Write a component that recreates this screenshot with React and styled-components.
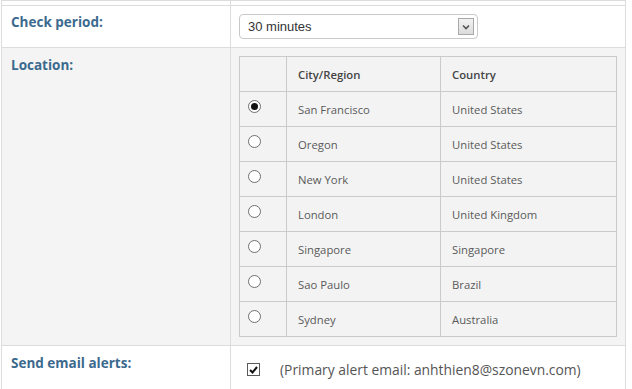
import React from "react";
import styled, { createGlobalStyle } from "styled-components";

const Global = createGlobalStyle`
  html, body { margin: 0; padding: 0; background: #fff; }
  body { font-family: "Open Sans", "Liberation Sans", sans-serif; }
`;

const Page = styled.div`
  padding-left: 1px;
  width: 625px;
`;

const FormTable = styled.table`
  border-collapse: collapse;
  width: 625px;
  table-layout: fixed;
`;

const Row = styled.tr`
  background: ${(p) => (p.$alt ? "#f4f4f4" : "#fff")};
`;

const LabelCell = styled.td`
  width: 229px;
  border: 1px solid #dcdcdc;
  vertical-align: top;
  padding: ${(p) => p.$pad || "8px 9px"};
  height: ${(p) => p.$h || "auto"};
  box-sizing: border-box;
  font-weight: 700;
  font-size: 13.5px;
  color: #3b6a8e;
`;

const ValueCell = styled.td`
  border: 1px solid #dcdcdc;
  vertical-align: top;
  padding: ${(p) => p.$pad || "8px 8px"};
  box-sizing: border-box;
`;

const SelectBox = styled.div`
  width: 239px;
  height: 25px;
  box-sizing: border-box;
  border: 1px solid #c9c9c9;
  border-radius: 4px;
  background: #fff;
  display: flex;
  align-items: center;
  justify-content: space-between;
  padding: 0 3px 0 8px;
  font-family: "Liberation Sans", Arial, sans-serif;
  font-size: 13px;
  color: #333;
`;

const DropButton = styled.div`
  width: 16px;
  height: 17px;
  box-sizing: border-box;
  border: 1px solid #a9a9a9;
  background: linear-gradient(#f2f2f2, #dcdcdc);
  display: flex;
  align-items: center;
  justify-content: center;
`;

const LocTable = styled.table`
  border-collapse: collapse;
  width: 378px;
  table-layout: fixed;
  background: #f3f3f3;
  font-size: 11.3px;
  color: #5a5a5a;
`;

const Th = styled.th`
  border: 1px solid #cacaca;
  height: 35px;
  padding: 0 11px;
  text-align: left;
  font-weight: 600;
  color: #444;
  width: ${(p) => p.$w || "auto"};
  box-sizing: border-box;
`;

const Td = styled.td`
  border: 1px solid #cacaca;
  height: 35px;
  padding: 0 11px;
  box-sizing: border-box;
  vertical-align: middle;
`;

const RadioCell = styled.td`
  border: 1px solid #cacaca;
  height: 35px;
  padding: 0 0 6px 8px;
  box-sizing: border-box;
  vertical-align: middle;
`;

const Radio = styled.span`
  display: block;
  width: 13px;
  height: 13px;
  box-sizing: border-box;
  border-radius: 50%;
  border: 1px solid #6f6f6f;
  background: #fff;
  position: relative;
  &::after {
    content: "";
    display: ${(p) => (p.$checked ? "block" : "none")};
    position: absolute;
    left: 2px;
    top: 2px;
    width: 7px;
    height: 7px;
    border-radius: 50%;
    background: #111;
  }
`;

const AlertLine = styled.div`
  display: flex;
  align-items: center;
  gap: 20px;
  padding: 14px 0 0 16px;
  font-size: 13.85px;
  line-height: 19px;
  color: #555;
`;

const CheckBox = styled.span`
  width: 13px;
  height: 13px;
  flex: none;
  box-sizing: border-box;
  border: 1px solid #5a5a5a;
  background: #fff;
  display: flex;
  align-items: center;
  justify-content: center;
`;

const locations = [
  ["San Francisco", "United States", true],
  ["Oregon", "United States"],
  ["New York", "United States"],
  ["London", "United Kingdom"],
  ["Singapore", "Singapore"],
  ["Sao Paulo", "Brazil"],
  ["Sydney", "Australia"],
];

export default function App() {
  return (
    <Page>
      <Global />
      <FormTable>
        <tbody>
          <Row>
            <LabelCell $pad="0" $h="5px" />
            <ValueCell $pad="0" />
          </Row>
          <Row>
            <LabelCell $pad="7px 9px 0" $h="42px">Check period:</LabelCell>
            <ValueCell $pad="8px 8px 0">
              <SelectBox>
                <span>30 minutes</span>
                <DropButton>
                  <svg width="8" height="6" viewBox="0 0 8 6">
                    <path d="M1 1.5 L4 4.5 L7 1.5" fill="none" stroke="#555" strokeWidth="1.6" />
                  </svg>
                </DropButton>
              </SelectBox>
            </ValueCell>
          </Row>
          <Row $alt>
            <LabelCell $pad="8px 9px 0" $h="298px">Location:</LabelCell>
            <ValueCell $pad="8px 8px 8px">
              <LocTable>
                <thead>
                  <tr>
                    <Th $w="47px" />
                    <Th $w="154px">City/Region</Th>
                    <Th>Country</Th>
                  </tr>
                </thead>
                <tbody>
                  {locations.map(([city, country, checked]) => (
                    <tr key={city}>
                      <RadioCell>
                        <Radio $checked={checked} />
                      </RadioCell>
                      <Td>{city}</Td>
                      <Td>{country}</Td>
                    </tr>
                  ))}
                </tbody>
              </LocTable>
            </ValueCell>
          </Row>
          <Row>
            <LabelCell $pad="8px 9px 0" $h="50px">Send email alerts:</LabelCell>
            <ValueCell $pad="0">
              <AlertLine>
                <CheckBox>
                  <svg width="9" height="8" viewBox="0 0 9 8">
                    <path d="M1 4 L3.5 6.5 L8 1" fill="none" stroke="#111" strokeWidth="2" />
                  </svg>
                </CheckBox>
                <span>(Primary alert email: anhthien8@szonevn.com)</span>
              </AlertLine>
            </ValueCell>
          </Row>
        </tbody>
      </FormTable>
    </Page>
  );
}
